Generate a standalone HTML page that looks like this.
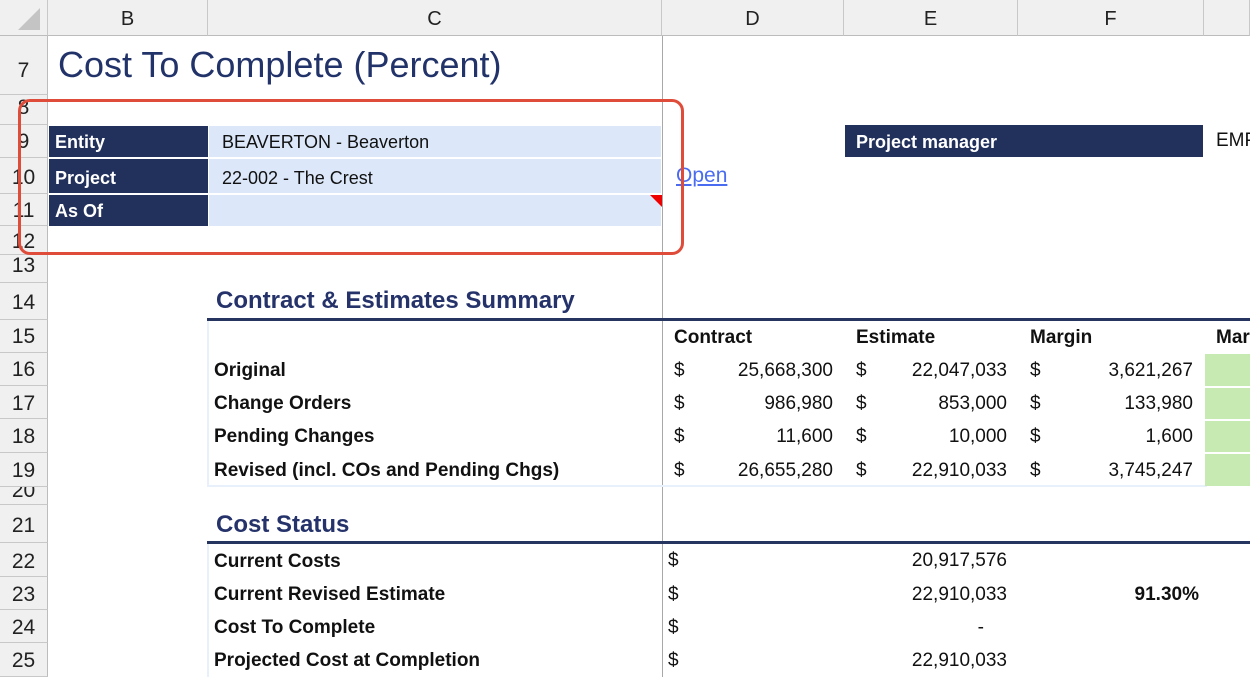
<!DOCTYPE html>
<html><head><meta charset="utf-8"><style>
body{margin:0;width:1250px;height:677px;overflow:hidden;background:#fff;font-family:"Liberation Sans",Arial,sans-serif;position:relative}
div{position:absolute;box-sizing:border-box;white-space:nowrap}
.ch{top:0;height:36px;background:#f0f0f0;border-right:1px solid #c8c8c8;border-bottom:1px solid #bcbcbc;font-size:20px;color:#222;text-align:center;line-height:38px}
.rh{left:0;width:48px;background:#f0f0f0;border-right:1px solid #bcbcbc;border-bottom:1px solid #c8c8c8;font-size:21px;color:#222;text-align:center;overflow:hidden}
.nv{background:#22305c;color:#fff;font-weight:bold;font-size:18px;padding-left:6px}
.lb{background:#dce8fa;color:#111;font-size:18px;padding-left:13px}
.l{left:214px;font-weight:bold;font-size:19px;color:#111}
.n{font-size:19px;color:#111}
.h{font-weight:bold;font-size:24px;color:#25336a;left:216px}
</style></head><body>
<div class="ch" style="left:0;width:48px"><svg width="48" height="36" style="position:absolute;left:0;top:0"><polygon points="40,8 40,30 18,30" fill="#c4c4c4"/></svg></div>
<div class="ch" style="left:48px;width:160px">B</div>
<div class="ch" style="left:208px;width:454px">C</div>
<div class="ch" style="left:662px;width:182px">D</div>
<div class="ch" style="left:844px;width:174px">E</div>
<div class="ch" style="left:1018px;width:186px">F</div>
<div class="ch" style="left:1204px;width:46px"></div>

<div class="rh" style="top:36px;height:59px;line-height:70px">7</div>
<div class="rh" style="top:95px;height:30px;line-height:26px">8</div>
<div class="rh" style="top:125px;height:33px;line-height:34px">9</div>
<div class="rh" style="top:158px;height:36px;line-height:40px">10</div>
<div class="rh" style="top:194px;height:32px;line-height:34px">11</div>
<div class="rh" style="top:226px;height:29px;line-height:32px">12</div>
<div class="rh" style="top:255px;height:28px;line-height:22px">13</div>
<div class="rh" style="top:283px;height:37px;line-height:40px">14</div>
<div class="rh" style="top:320px;height:33px;line-height:34px">15</div>
<div class="rh" style="top:353px;height:33px;line-height:34px">16</div>
<div class="rh" style="top:386px;height:33px;line-height:36px">17</div>
<div class="rh" style="top:419px;height:34px;line-height:36px">18</div>
<div class="rh" style="top:453px;height:34px;line-height:36px">19</div>
<div class="rh" style="top:487px;height:18px;line-height:8px">20</div>
<div class="rh" style="top:505px;height:38px;line-height:42px">21</div>
<div class="rh" style="top:543px;height:34px;line-height:38px">22</div>
<div class="rh" style="top:577px;height:33px;line-height:36px">23</div>
<div class="rh" style="top:610px;height:33px;line-height:36px">24</div>
<div class="rh" style="top:643px;height:34px;line-height:36px">25</div>

<div style="left:662px;top:36px;width:1px;height:641px;background:#a8a8a8"></div>

<div style="left:58px;top:44px;font-size:36px;color:#22336a">Cost To Complete (Percent)</div>

<div class="nv" style="left:49px;top:126px;width:159px;height:31px;line-height:32px">Entity</div>
<div class="nv" style="left:49px;top:159px;width:159px;height:34px;line-height:38px">Project</div>
<div class="nv" style="left:49px;top:195px;width:159px;height:31px;line-height:32px">As Of</div>
<div class="lb" style="left:209px;top:126px;width:452px;height:31px;line-height:32px">BEAVERTON - Beaverton</div>
<div class="lb" style="left:209px;top:159px;width:452px;height:34px;line-height:38px">22-002 - The Crest</div>
<div class="lb" style="left:209px;top:195px;width:452px;height:31px"></div>
<svg style="position:absolute;left:650px;top:195px" width="12" height="12"><polygon points="0,0 12,0 12,12" fill="#e00"/></svg>
<div style="left:676px;top:164px;font-size:21px;color:#4a6cf0;text-decoration:underline">Open</div>
<div class="nv" style="left:845px;top:125px;width:358px;height:32px;line-height:34px;padding-left:11px">Project manager</div>
<div class="n" style="left:1216px;top:130px">EMP</div>

<div style="left:18px;top:99px;width:666px;height:156px;border:3px solid #e04c3a;border-radius:12px"></div>

<div class="h" style="top:287px">Contract &amp; Estimates Summary</div>
<div style="left:207px;top:318px;width:1043px;height:3px;background:#26355f"></div>
<div style="left:207px;top:321px;width:2px;height:166px;background:#e8f0fb"></div>
<div style="left:207px;top:485px;width:1000px;height:2px;background:#e8f0fb"></div>
<div class="n" style="left:674px;top:327px;font-weight:bold">Contract</div>
<div class="n" style="left:856px;top:327px;font-weight:bold">Estimate</div>
<div class="n" style="left:1030px;top:327px;font-weight:bold">Margin</div>
<div class="n" style="left:1216px;top:327px;font-weight:bold">Mar</div>

<div class="l" style="top:360px">Original</div>
<div class="l" style="top:393px">Change Orders</div>
<div class="l" style="top:426px">Pending Changes</div>
<div class="l" style="top:460px">Revised (incl. COs and Pending Chgs)</div>

<div style="left:1205px;top:354px;width:45px;height:32px;background:#c6eab2"></div>
<div style="left:1205px;top:388px;width:45px;height:31px;background:#c6eab2"></div>
<div style="left:1205px;top:421px;width:45px;height:31px;background:#c6eab2"></div>
<div style="left:1205px;top:454px;width:45px;height:32px;background:#c6eab2"></div>

<div class="n" style="left:674px;top:360px">$</div><div class="n" style="right:417px;top:360px">25,668,300</div>
<div class="n" style="left:856px;top:360px">$</div><div class="n" style="right:243px;top:360px">22,047,033</div>
<div class="n" style="left:1030px;top:360px">$</div><div class="n" style="right:57px;top:360px">3,621,267</div>
<div class="n" style="left:674px;top:393px">$</div><div class="n" style="right:417px;top:393px">986,980</div>
<div class="n" style="left:856px;top:393px">$</div><div class="n" style="right:243px;top:393px">853,000</div>
<div class="n" style="left:1030px;top:393px">$</div><div class="n" style="right:57px;top:393px">133,980</div>
<div class="n" style="left:674px;top:426px">$</div><div class="n" style="right:417px;top:426px">11,600</div>
<div class="n" style="left:856px;top:426px">$</div><div class="n" style="right:243px;top:426px">10,000</div>
<div class="n" style="left:1030px;top:426px">$</div><div class="n" style="right:57px;top:426px">1,600</div>
<div class="n" style="left:674px;top:460px">$</div><div class="n" style="right:417px;top:460px">26,655,280</div>
<div class="n" style="left:856px;top:460px">$</div><div class="n" style="right:243px;top:460px">22,910,033</div>
<div class="n" style="left:1030px;top:460px">$</div><div class="n" style="right:57px;top:460px">3,745,247</div>

<div class="h" style="top:511px">Cost Status</div>
<div style="left:207px;top:541px;width:1043px;height:3px;background:#26355f"></div>
<div style="left:207px;top:544px;width:2px;height:133px;background:#e8f0fb"></div>
<div class="l" style="top:551px">Current Costs</div>
<div class="l" style="top:584px">Current Revised Estimate</div>
<div class="l" style="top:617px">Cost To Complete</div>
<div class="l" style="top:650px">Projected Cost at Completion</div>

<div class="n" style="left:668px;top:550px">$</div><div class="n" style="right:243px;top:550px">20,917,576</div>
<div class="n" style="left:668px;top:584px">$</div><div class="n" style="right:243px;top:584px">22,910,033</div>
<div class="n" style="right:51px;top:584px;font-weight:bold">91.30%</div>
<div class="n" style="left:668px;top:617px">$</div><div class="n" style="right:266px;top:617px">-</div>
<div class="n" style="left:668px;top:650px">$</div><div class="n" style="right:243px;top:650px">22,910,033</div>
</body></html>
